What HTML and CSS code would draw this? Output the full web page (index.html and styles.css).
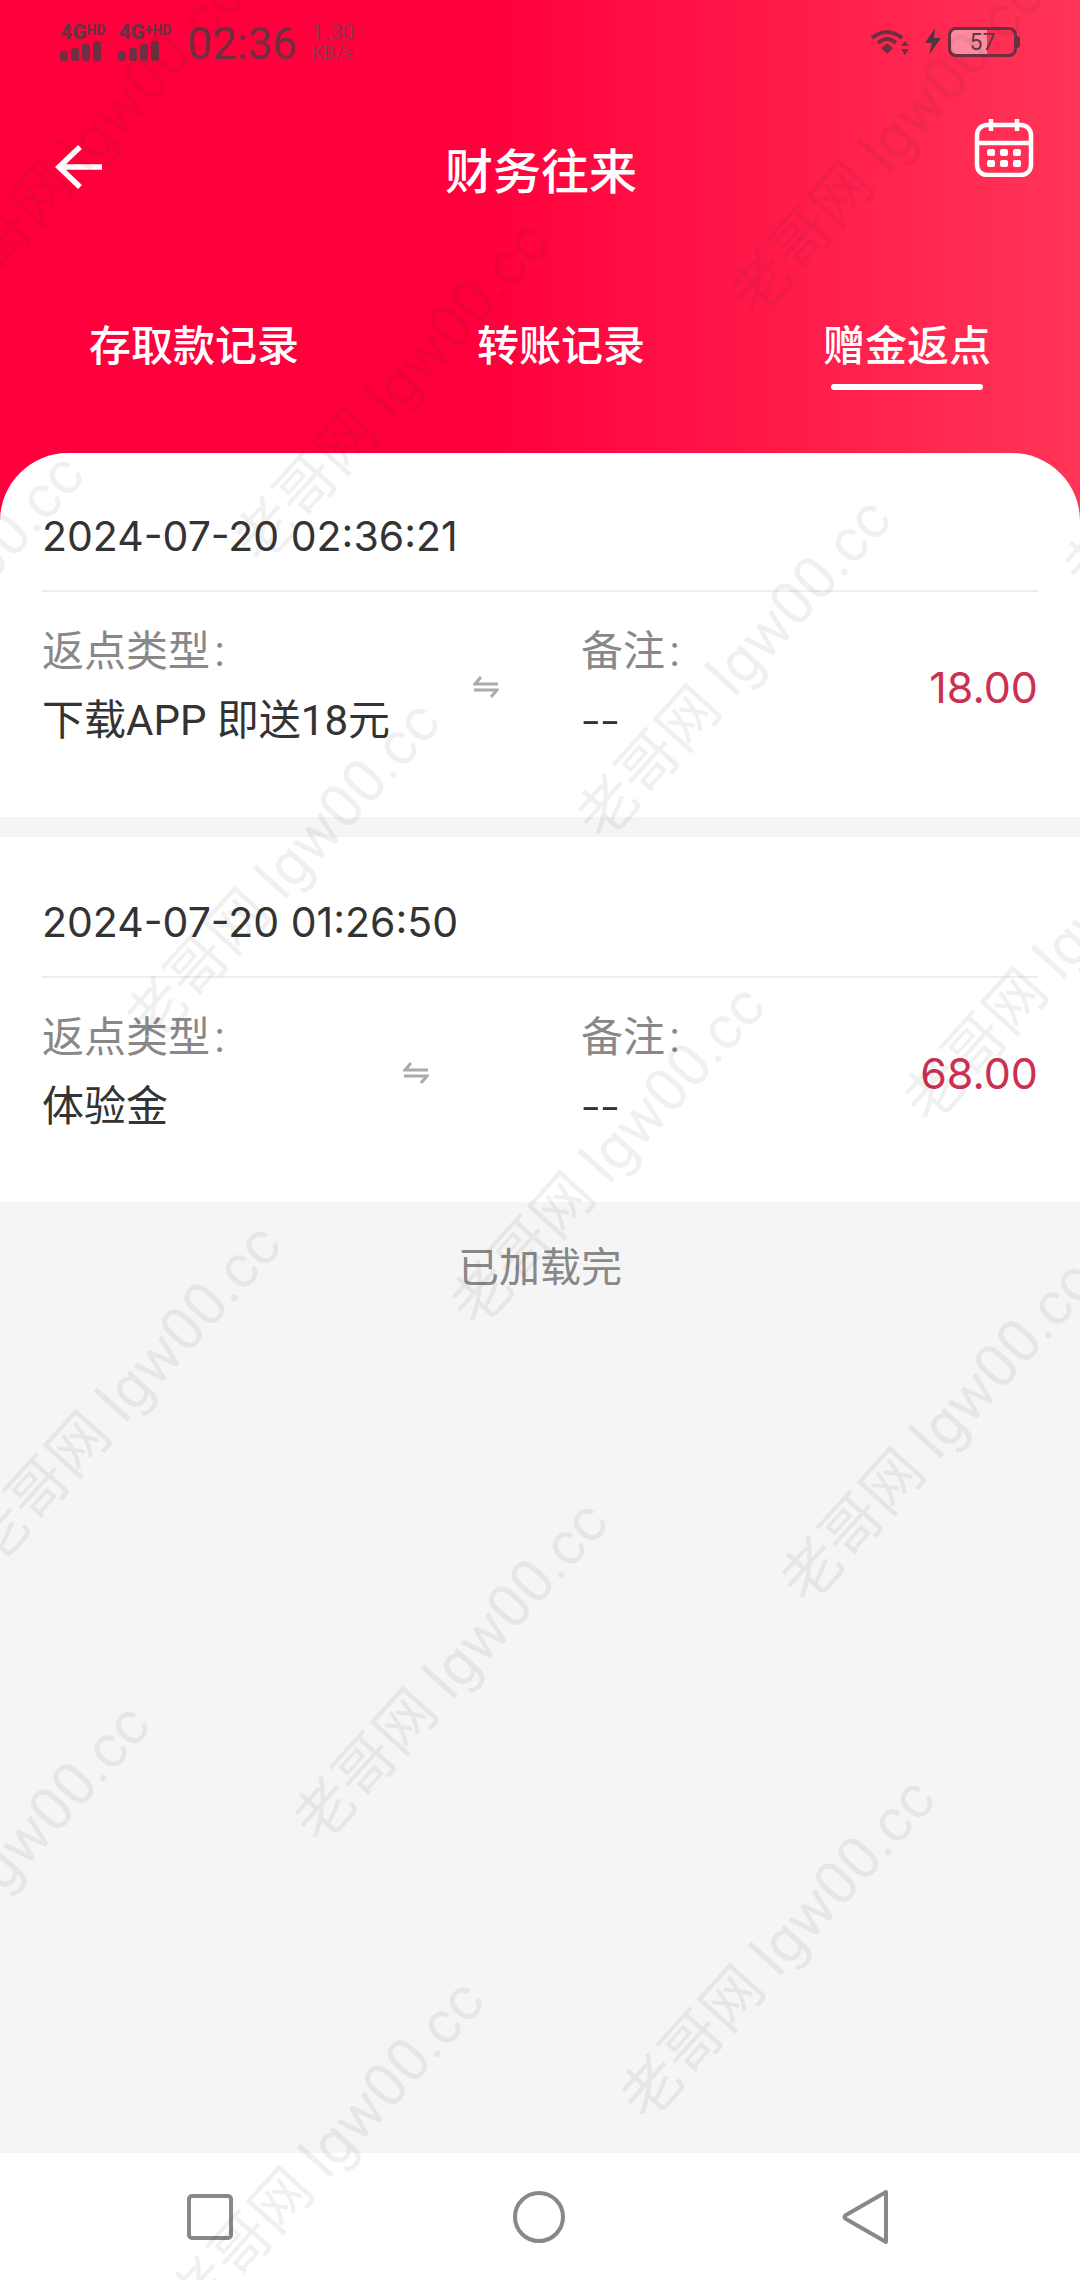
FILE: index.html
```html
<!DOCTYPE html>
<html lang="zh-CN">

<head>
    <meta charset="UTF-8" />
    <link rel="stylesheet" href="styles.css">
    <title>财务往来</title>
</head>

<body>
    <div class="page">
        <header class="head">
            <div class="status">
                <div class="status-left">
                    <div class="net">
                        <p class="net-name">4G<span>HD</span></p>
                        <div class="bars"><i class="b1"></i><i class="b2"></i><i class="b3"></i><i class="b4"></i></div>
                    </div>
                    <div class="net">
                        <p class="net-name">4G<span>+HD</span></p>
                        <div class="bars"><i class="b1"></i><i class="b2"></i><i class="b3"></i><i class="b4"></i></div>
                    </div>
                    <p class="clock">02:36</p>
                    <p class="speed">1.30<span>KB/s</span></p>
                </div>
                <div class="status-right">
                    <svg class="wifi" width="42" height="28" viewBox="0 0 42 28">
                        <path d="M3 10 Q18 -2 33 10" fill="none" stroke="#6d3040" stroke-width="4" />
                        <path d="M9 15 Q18 7 27 15" fill="none" stroke="#6d3040" stroke-width="4" />
                        <path d="M12 20 L18 15.5 L24 20 L18 26 Z" fill="#6d3040" />
                        <path d="M36 13 L40 18 L32 18 Z M36 27 L40 21 L32 21 Z" fill="#6d3040" />
                    </svg>
                    <svg class="bolt" width="18" height="28" viewBox="0 0 18 28">
                        <path d="M11 0 L1 15 L8 15 L5 27 L17 10 L10 10 Z" fill="#4d3640" />
                    </svg>
                    <div class="battery">
                        <div class="battery-fill"></div>
                        <span>57</span>
                    </div>
                    <i class="battery-cap"></i>
                </div>
            </div>

            <div class="bar">
                <svg class="back" width="50" height="46" viewBox="0 0 50 46">
                    <path d="M26 3 L5 23 L26 43 M5 23 L48 23" fill="none" stroke="#fff" stroke-width="5.5" />
                </svg>
                <p class="title">财务往来</p>
                <svg class="calendar" width="60" height="60" viewBox="0 0 60 60">
                    <rect x="3" y="8" width="54" height="50" rx="10" fill="none" stroke="#fff" stroke-width="4.5" />
                    <path d="M3 26 H57 M17 2 V14 M43 2 V14" fill="none" stroke="#fff" stroke-width="4.5" />
                    <g fill="#fff">
                        <rect x="13" y="32" width="8" height="7" rx="2" />
                        <rect x="26" y="32" width="8" height="7" rx="2" />
                        <rect x="39" y="32" width="8" height="7" rx="2" />
                        <rect x="13" y="43" width="8" height="7" rx="2" />
                        <rect x="26" y="43" width="8" height="7" rx="2" />
                        <rect x="39" y="43" width="8" height="7" rx="2" />
                    </g>
                </svg>
            </div>

            <nav class="tabs">
                <a href="#" class="tab">存取款记录</a>
                <a href="#" class="tab">转账记录</a>
                <a href="#" class="tab active">赠金返点</a>
            </nav>
        </header>

        <main class="list">
            <section class="card">
                <p class="date">2024-07-20 02:36:21</p>
                <div class="row">
                    <div class="col type">
                        <p class="label">返点类型 :</p>
                        <p class="value">下载APP 即送18元</p>
                    </div>
                    <div class="swap-wrap">
                        <svg class="swap" width="26" height="22" viewBox="0 0 26 22">
                            <path d="M8 1 L2 8 H25 M1 14 H24 L18 21" fill="none" stroke="#aaa" stroke-width="3" />
                        </svg>
                    </div>
                    <div class="col note">
                        <p class="label">备注 :</p>
                        <p class="value dash">--</p>
                    </div>
                    <p class="amount">18.00</p>
                </div>
            </section>

            <section class="card">
                <p class="date">2024-07-20 01:26:50</p>
                <div class="row">
                    <div class="col type">
                        <p class="label">返点类型 :</p>
                        <p class="value">体验金</p>
                    </div>
                    <div class="swap-wrap">
                        <svg class="swap" width="26" height="22" viewBox="0 0 26 22">
                            <path d="M8 1 L2 8 H25 M1 14 H24 L18 21" fill="none" stroke="#aaa" stroke-width="3" />
                        </svg>
                    </div>
                    <div class="col note">
                        <p class="label">备注 :</p>
                        <p class="value dash">--</p>
                    </div>
                    <p class="amount">68.00</p>
                </div>
            </section>

            <p class="done">已加载完</p>
        </main>

        <footer class="nav">
            <svg width="50" height="50" viewBox="0 0 50 50">
                <rect x="4" y="4" width="42" height="42" rx="3" fill="none" stroke="#888" stroke-width="4" />
            </svg>
            <svg width="54" height="54" viewBox="0 0 54 54">
                <circle cx="27" cy="27" r="24" fill="none" stroke="#888" stroke-width="4" />
            </svg>
            <svg width="48" height="56" viewBox="0 0 48 56">
                <path d="M44 3 V53 L4 30 Q1 28 4 26 Z" fill="none" stroke="#888" stroke-width="4" stroke-linejoin="round" />
            </svg>
        </footer>

        <div class="marks">
            <span class="wm wm1">老哥网 lgw00.cc</span>
            <span class="wm wm2">老哥网 lgw00.cc</span>
            <span class="wm wm3">老哥网 lgw00.cc</span>
            <span class="wm wm4">老哥网 lgw00.cc</span>
            <span class="wm wm5">老哥网 lgw00.cc</span>
            <span class="wm wm6">老哥网 lgw00.cc</span>
            <span class="wm wm7">老哥网 lgw00.cc</span>
            <span class="wm wm8">老哥网 lgw00.cc</span>
            <span class="wm wm9">老哥网 lgw00.cc</span>
            <span class="wm wm10">老哥网 lgw00.cc</span>
            <span class="wm wm11">老哥网 lgw00.cc</span>
            <span class="wm wm12">老哥网 lgw00.cc</span>
            <span class="wm wm13">老哥网 lgw00.cc</span>
            <span class="wm wm14">老哥网 lgw00.cc</span>
            <span class="wm wm15">老哥网 lgw00.cc</span>
        </div>
    </div>
</body>

</html>
```

FILE: styles.css
```css
* {
    margin: 0;
    padding: 0;
    box-sizing: border-box;
    font-family: 'Roboto', 'Noto Sans CJK SC', sans-serif;
}

body {
    width: 1080px;
    height: 2280px;
    overflow: hidden;
}

.page {
    position: relative;
    width: 1080px;
    height: 2280px;
    overflow: hidden;
    display: flex;
    flex-direction: column;
    background: #f5f5f5;
}

/* red header */

.head {
    height: 520px;
    flex: none;
    background: linear-gradient(90deg, #ff003c 0, #ff003c 45%, #ff3558 100%);
}

.status {
    height: 90px;
    padding: 22px 60px 0 60px;
    display: flex;
    justify-content: space-between;
    align-items: flex-start;
}

.status-left {
    display: flex;
    align-items: flex-start;
}

.status-right {
    display: flex;
    align-items: center;
    padding-top: 5px;
}

.net {
    margin-right: 13px;
}

.net-name {
    font-size: 21px;
    line-height: 16px;
    font-weight: 900;
    color: #6d3040;
    white-space: nowrap;
}

.net-name span {
    font-size: 14px;
    font-weight: 900;
    vertical-align: 4px;
}

.bars {
    display: flex;
    align-items: flex-end;
    gap: 3px;
    height: 20px;
    margin-top: 1px;
}

.bars i {
    width: 8px;
    border-radius: 3px;
    background: #6d3040;
}

.bars .b1 {
    height: 10px;
}

.bars .b2 {
    height: 13px;
}

.bars .b3 {
    height: 17px;
}

.bars .b4 {
    height: 20px;
}

.clock {
    margin-left: 3px;
    font-size: 44px;
    line-height: 44px;
    color: #6d3040;
}

.speed {
    margin-left: 15px;
    font-size: 22px;
    line-height: 21px;
    color: #96304a;
}

.speed span {
    display: block;
    font-size: 19px;
    line-height: 20px;
}

.wifi {
    margin-right: 13px;
}

.bolt {
    margin-right: 6px;
}

.battery {
    position: relative;
    width: 69px;
    height: 30px;
    border: 3px solid #6d3040;
    border-radius: 8px;
    display: flex;
    align-items: center;
    justify-content: center;
    overflow: hidden;
}

.battery-fill {
    position: absolute;
    left: 0;
    top: 0;
    bottom: 0;
    width: 57%;
    background: rgba(255, 255, 255, 0.45);
}

.battery span {
    position: relative;
    font-size: 23px;
    color: #5a3a44;
}

.battery-cap {
    width: 3px;
    height: 12px;
    border-radius: 0 3px 3px 0;
    background: #6d3040;
}

.bar {
    height: 155px;
    padding: 0 46px 0 54px;
    display: flex;
    align-items: center;
    justify-content: space-between;
}

.back {
    margin-top: -2px;
}

.title {
    font-size: 48px;
    font-weight: 500;
    color: #fff;
    margin: 0 0 0 4px;
}

.calendar {
    margin-top: -41px;
}

.tabs {
    display: flex;
    justify-content: space-around;
    height: 90px;
    margin-top: 72px;
}

.tab {
    position: relative;
    height: 74px;
    font-size: 42px;
    line-height: 60px;
    font-weight: 500;
    color: #fff;
    text-decoration: none;
}

.tab.active::after {
    content: "";
    position: absolute;
    left: 8px;
    right: 8px;
    bottom: 1px;
    height: 6px;
    border-radius: 3px;
    background: #fff;
}

/* records */

.list {
    flex: 1;
    margin-top: -67px;
    position: relative;
}

.card {
    height: 365px;
    padding: 0 42px;
    background: #fff;
    margin-bottom: 20px;
}

.card:first-child {
    height: 364px;
    border-radius: 68px 68px 0 0;
}

.date {
    height: 139px;
    padding-top: 56px;
    border-bottom: 2px solid #eeeeee;
    font-family: 'Inter', 'Noto Sans CJK SC', sans-serif;
    font-size: 41px;
    line-height: 54px;
    white-space: nowrap;
    color: #333;
}

.card + .card .date {
    height: 141px;
    padding-top: 58px;
}

.row {
    display: flex;
    align-items: center;
    padding-top: 32px;
}

.col {
    flex: none;
}

.type {
    min-width: 208px;
}

.swap-wrap {
    flex: 1;
    display: flex;
    justify-content: center;
}

.note {
    width: 339px;
}

.label {
    font-size: 42px;
    line-height: 56px;
    word-spacing: -6px;
    color: #888;
}

.value {
    margin-top: 13px;
    font-size: 42px;
    line-height: 56px;
    color: #333;
}

.dash {
    font-family: 'Noto Sans CJK SC', sans-serif;
    font-size: 58px;
    font-weight: 300;
    margin-top: 6px;
    margin-bottom: 7px;
}

.amount {
    width: 118px;
    flex: none;
    font-family: 'Inter', sans-serif;
    font-size: 43px;
    text-align: right;
    white-space: nowrap;
    color: #cc2f50;
}

.done {
    margin-top: 38px;
    text-align: center;
    font-size: 41px;
    line-height: 56px;
    color: #888;
}

/* bottom nav */

.nav {
    height: 127px;
    flex: none;
    background: #fff;
    display: flex;
    align-items: center;
    justify-content: space-between;
    padding: 0 190px 0 185px;
}

/* watermark */

.marks {
    position: absolute;
    inset: 0;
    pointer-events: none;
}

.wm {
    position: absolute;
    white-space: nowrap;
    font-size: 60px;
    line-height: 70px;
    color: rgba(40, 40, 40, 0.07);
    transform: translate(-50%, -50%) rotate(-48deg);
}

.wm1 { left: 87px; top: 145px; }
.wm2 { left: 392px; top: 392px; }
.wm3 { left: 734px; top: 669px; }
.wm4 { left: -73px; top: 625px; }
.wm5 { left: 283px; top: 872px; }
.wm6 { left: 608px; top: 1156px; }
.wm7 { left: 1061px; top: 952px; }
.wm8 { left: 124px; top: 1395px; }
.wm9 { left: 938px; top: 1432px; }
.wm10 { left: 451px; top: 1672px; }
.wm11 { left: 778px; top: 1949px; }
.wm12 { left: -7px; top: 1875px; }
.wm13 { left: 327px; top: 2151px; }
.wm14 { left: 887px; top: 145px; }
.wm15 { left: 1221px; top: 420px; }
```
